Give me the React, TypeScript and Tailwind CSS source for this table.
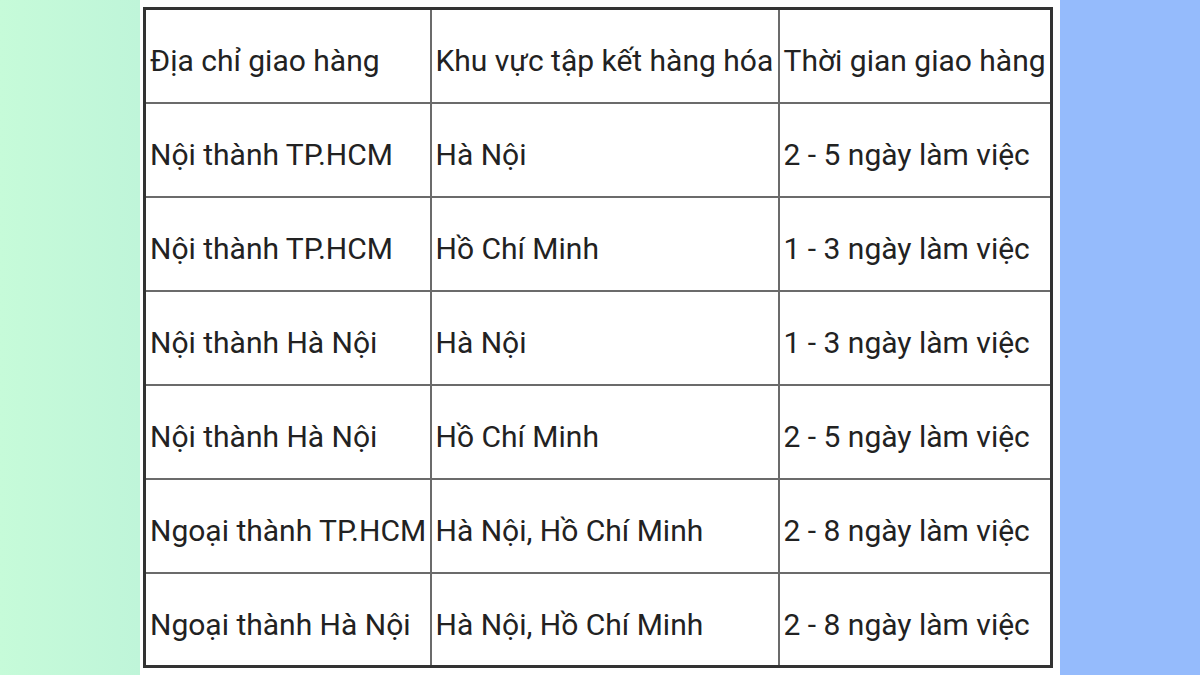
const rows = [
  ["Nội thành TP.HCM", "Hà Nội", "2 - 5 ngày làm việc"],
  ["Nội thành TP.HCM", "Hồ Chí Minh", "1 - 3 ngày làm việc"],
  ["Nội thành Hà Nội", "Hà Nội", "1 - 3 ngày làm việc"],
  ["Nội thành Hà Nội", "Hồ Chí Minh", "2 - 5 ngày làm việc"],
  ["Ngoại thành TP.HCM", "Hà Nội, Hồ Chí Minh", "2 - 8 ngày làm việc"],
  ["Ngoại thành Hà Nội", "Hà Nội, Hồ Chí Minh", "2 - 8 ngày làm việc"],
];

const cell = "border-2 border-[#6b6b6b] pl-[4px] pr-0 pt-[11px] align-middle whitespace-nowrap";

export default function App() {
  return (
    <div className="w-[1200px] h-[675px] flex overflow-hidden font-['Roboto',sans-serif] text-[#222]">
      <div className="w-[140px] h-full bg-gradient-to-r from-[#c6fbd9] to-[#bff5d9]" />
      <div className="w-[920px] h-full bg-white pt-[7px] pl-[3px]">
        <table className="border-collapse border-[3px] border-[#333] text-[30px] leading-none">
          <colgroup>
            <col className="w-[286px]" />
            <col className="w-[348px]" />
            <col className="w-[273px]" />
          </colgroup>
          <tbody>
            <tr className="h-[94px]">
              <td className={cell}>Địa chỉ giao hàng</td>
              <td className={cell}>Khu vực tập kết hàng hóa</td>
              <td className={cell}>Thời gian giao hàng</td>
            </tr>
            {rows.map((r, i) => (
              <tr key={i} className="h-[94px]">
                {r.map((t, j) => (
                  <td key={j} className={cell}>
                    {t}
                  </td>
                ))}
              </tr>
            ))}
          </tbody>
        </table>
      </div>
      <div className="flex-1 h-full bg-[#95bbfc]" />
    </div>
  );
}
